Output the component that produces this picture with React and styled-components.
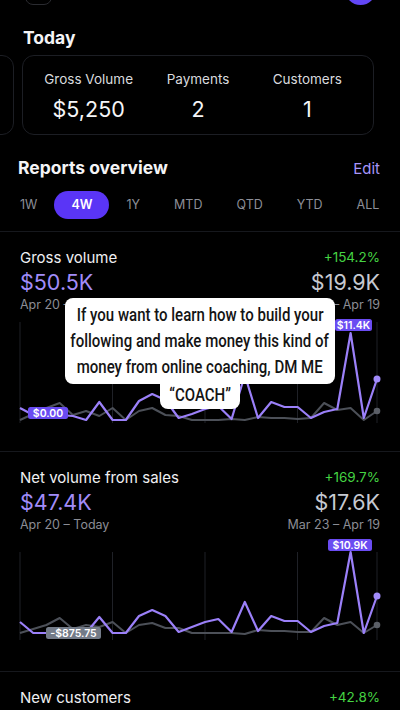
import styled, { createGlobalStyle } from "styled-components";

const GlobalStyle = createGlobalStyle`
  body {
    margin: 0;
    background: #000;
    font-family: Inter, "Noto Sans", sans-serif;
    color: #f2f2f4;
  }
`;

const Page = styled.div`
  position: relative;
  width: 400px;
  height: 710px;
  overflow: hidden;
  background: #000;
`;

const TopBar = styled.div`
  display: flex;
  align-items: flex-end;
  justify-content: space-between;
  height: 32px;
  margin-top: -27px;
  padding: 0 24px 0 25px;
`;

const SquareButton = styled.div`
  width: 27px;
  height: 27px;
  border: 1px solid #2a2b30;
  border-radius: 8px;
  box-sizing: border-box;
`;

const Avatar = styled.div`
  width: 31px;
  height: 31px;
  border-radius: 50%;
  background: #6247f6;
`;

const Heading = styled.h2`
  margin: ${(p) => p.$mt}px 0 0;
  font-size: 17.5px;
  line-height: 22px;
  font-weight: 700;
  color: #f4f4f6;
`;

const TodayTitle = styled(Heading)`
  padding-left: 23px;
`;

const Carousel = styled.div`
  display: flex;
  gap: 8px;
  margin-top: 6px;
  padding-left: 22px;
`;

const Card = styled.div`
  flex: 0 0 352px;
  height: 80px;
  box-sizing: border-box;
  border: 1px solid #1c1e24;
  border-radius: 12px;
  display: grid;
  grid-template-columns: repeat(3, 1fr);
  padding: 14px 11px 0;
  margin-left: ${(p) => (p.$peek ? "-360px" : "0")};
`;

const Stat = styled.div`
  display: flex;
  flex-direction: column;
  align-items: center;
`;

const StatLabel = styled.div`
  font-size: 13.5px;
  line-height: 18px;
  color: #d9dade;
`;

const StatValue = styled.div`
  margin-top: 8px;
  font-size: 21.5px;
  line-height: 26px;
  color: #f5f5f7;
`;

const ReportsHeader = styled.div`
  display: flex;
  justify-content: space-between;
  align-items: center;
  margin-top: 22px;
  padding: 0 20px 0 18px;
`;

const EditLink = styled.span`
  font-size: 15px;
  color: #a796fa;
`;

const Tabs = styled.div`
  display: flex;
  justify-content: space-between;
  margin-top: 12px;
  padding: 0 6px 0 3px;
  margin-bottom: 12px;
`;

const Tab = styled.div`
  height: 28px;
  line-height: 28px;
  padding: 0 17px;
  border-radius: 14px;
  font-size: 12.5px;
  font-weight: ${(p) => (p.$active ? 600 : 400)};
  color: ${(p) => (p.$active ? "#ffffff" : "#8c8e97")};
  background: ${(p) => (p.$active ? "#5a35f6" : "transparent")};
`;

const ReportSection = styled.section`
  height: 220px;
  box-sizing: border-box;
  border-top: 1px solid #16181d;
  padding-top: 15px;
`;

const Row = styled.div`
  display: flex;
  justify-content: space-between;
  align-items: center;
  padding: 0 20px;
  height: ${(p) => p.$h}px;
`;

const ReportTitle = styled.span`
  font-size: 15px;
  color: #f0f0f3;
`;

const Change = styled.span`
  font-size: 13.5px;
  color: #45d443;
`;

const BigValue = styled.span`
  font-size: 21.5px;
  color: ${(p) => (p.$current ? "#a28cf9" : "#c6c9d1")};
`;

const DateText = styled.span`
  font-size: 12.5px;
  color: #8b8d95;
`;

const ChartSvg = styled.svg`
  display: block;
  width: 400px;
  height: 125px;
`;

const Caption = styled.div`
  position: absolute;
  top: 298px;
  left: 65px;
  width: 270px;
  display: flex;
  flex-direction: column;
  align-items: center;
  font-family: Roboto, "Liberation Sans", sans-serif;
  font-weight: 500;
  color: #141414;
`;

const CaptionBox = styled.div`
  width: 100%;
  box-sizing: border-box;
  display: flex;
  flex-direction: column;
  align-items: center;
  background: #fff;
  border-radius: 8px;
  padding: 4px 0;
`;

const CaptionTail = styled(CaptionBox)`
  width: 80px;
  border-radius: 0 0 8px 8px;
  margin-top: -2px;
  padding: 0 0 1px;
`;

const CaptionLine = styled.div`
  width: max-content;
  white-space: nowrap;
  font-size: 19px;
  line-height: 26px;
  transform: scaleX(0.79);
  transform-origin: center;
`;

const xs = Array.from({ length: 28 }, (_, i) => 20 + (i * 357) / 27);
const gridX = [20, 112.5, 205, 297.5, 377];

const charts = [
  {
    title: "Gross volume",
    change: "+154.2%",
    current: "$50.5K",
    previous: "$19.9K",
    currentRange: "Apr 20 – Today",
    previousRange: "Mar 23 – Apr 19",
    gridTop: 11,
    gridBottom: 112,
    purple: [97, 104, 104, 104, 105, 109, 91, 109, 109, 90, 83, 89, 107, 103, 98, 95, 108, 64, 107, 91, 96, 96, 107, 101, 98, 22, 107, 68],
    gray: [109, 103, 97, 92, 104, 100, 105, 97, 109, 100, 97, 104, 105, 109, 109, 109, 108, 109, 106, 107, 107, 108, 107, 92, 99, 97, 109, 100],
    peak: { label: "$11.4K", x: 335, y: 8, w: 37 },
    low: { label: "$0.00", x: 28, y: 96, w: 40, fill: "#6a4cf2" },
  },
  {
    title: "Net volume from sales",
    change: "+169.7%",
    current: "$47.4K",
    previous: "$17.6K",
    currentRange: "Apr 20 – Today",
    previousRange: "Mar 23 – Apr 19",
    gridTop: 21,
    gridBottom: 109,
    purple: [91, 102, 102, 102, 102, 102, 86, 102, 102, 85, 79, 85, 101, 96, 91, 88, 101, 71, 100, 85, 90, 90, 101, 95, 92, 21, 102, 65],
    gray: [102, 98, 94, 87, 98, 94, 96, 91, 102, 94, 92, 97, 97, 102, 102, 102, 102, 103, 99, 100, 100, 101, 101, 87, 94, 91, 102, 94],
    peak: { label: "$10.9K", x: 328, y: 8, w: 44 },
    low: { label: "-$875.75", x: 46, y: 96, w: 55, fill: "#737b88" },
  },
];

const toPoints = (ys) => ys.map((y, i) => `${xs[i].toFixed(1)},${y}`).join(" ");

function Badge({ label, x, y, w, fill = "#6a4cf2" }) {
  return (
    <g>
      <rect x={x} y={y} width={w} height={12} rx={2.5} fill={fill} />
      <text
        x={x + w / 2}
        y={y + 9.5}
        textAnchor="middle"
        fontSize="10.5"
        fontWeight="600"
        fontFamily="Inter, sans-serif"
        fill="#fff"
      >
        {label}
      </text>
    </g>
  );
}

function Chart({ data }) {
  const last = xs.length - 1;
  return (
    <ChartSvg viewBox="0 0 400 125">
      {gridX.map((x) => (
        <line key={x} x1={x} x2={x} y1={data.gridTop} y2={data.gridBottom} stroke="#1f2127" strokeWidth="1" />
      ))}
      <polyline points={toPoints(data.gray)} fill="none" stroke="#4c5058" strokeWidth="2" strokeLinejoin="round" />
      <polyline points={toPoints(data.purple)} fill="none" stroke="#9b80f9" strokeWidth="2.2" strokeLinejoin="round" />
      <circle cx={xs[last]} cy={data.gray[last]} r="3.3" fill="#5b5f67" />
      <circle cx={xs[last]} cy={data.purple[last]} r="3.5" fill="#a28cfb" />
      <Badge {...data.peak} />
      <Badge {...data.low} />
    </ChartSvg>
  );
}

function Report({ data }) {
  return (
    <ReportSection>
      <Row $h={20}>
        <ReportTitle>{data.title}</ReportTitle>
        <Change>{data.change}</Change>
      </Row>
      <Row $h={30}>
        <BigValue $current>{data.current}</BigValue>
        <BigValue>{data.previous}</BigValue>
      </Row>
      <Row $h={14}>
        <DateText>{data.currentRange}</DateText>
        <DateText>{data.previousRange}</DateText>
      </Row>
      <Chart data={data} />
    </ReportSection>
  );
}

const tabs = ["1W", "4W", "1Y", "MTD", "QTD", "YTD", "ALL"];

const captionLines = [
  "If you want to learn how to build your",
  "following and make money this kind of",
  "money from online coaching, DM ME",
];

export default function App() {
  return (
    <Page>
      <GlobalStyle />
      <TopBar>
        <SquareButton />
        <Avatar />
      </TopBar>

      <TodayTitle $mt={22}>Today</TodayTitle>
      <Carousel>
        <Card $peek />
        <Card>
          <Stat>
            <StatLabel>Gross Volume</StatLabel>
            <StatValue>$5,250</StatValue>
          </Stat>
          <Stat>
            <StatLabel>Payments</StatLabel>
            <StatValue>2</StatValue>
          </Stat>
          <Stat>
            <StatLabel>Customers</StatLabel>
            <StatValue>1</StatValue>
          </Stat>
        </Card>
      </Carousel>

      <ReportsHeader>
        <Heading $mt={0}>Reports overview</Heading>
        <EditLink>Edit</EditLink>
      </ReportsHeader>
      <Tabs>
        {tabs.map((t) => (
          <Tab key={t} $active={t === "4W"}>
            {t}
          </Tab>
        ))}
      </Tabs>

      {charts.map((c) => (
        <Report key={c.title} data={c} />
      ))}

      <ReportSection>
        <Row $h={20}>
          <ReportTitle>New customers</ReportTitle>
          <Change>+42.8%</Change>
        </Row>
      </ReportSection>

      <Caption>
        <CaptionBox>
          {captionLines.map((l) => (
            <CaptionLine key={l}>{l}</CaptionLine>
          ))}
        </CaptionBox>
        <CaptionTail>
          <CaptionLine>“COACH”</CaptionLine>
        </CaptionTail>
      </Caption>
    </Page>
  );
}
